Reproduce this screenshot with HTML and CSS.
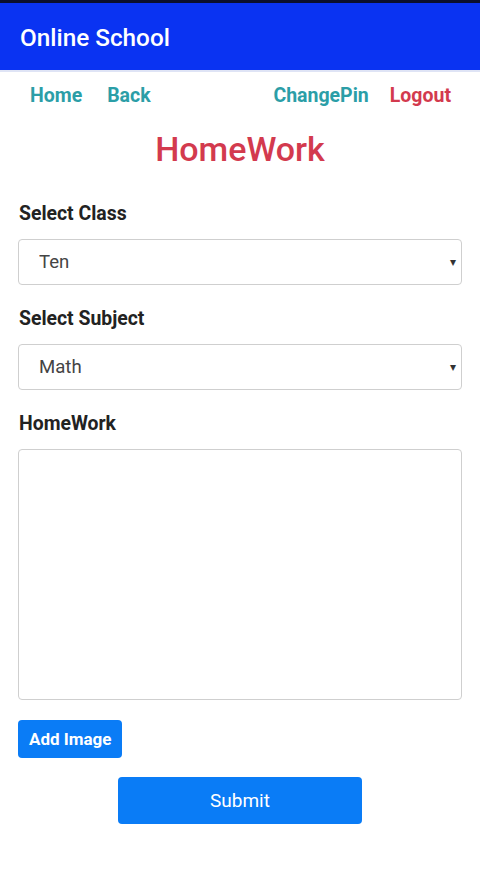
FILE: index.html
```html
<!DOCTYPE html>
<html lang="en">
<head>
    <meta charset="UTF-8">
    <meta name="viewport" content="width=device-width, initial-scale=1.0">
    <title>HomeWork</title>
    <link rel="stylesheet" href="styles.css">
</head>
<body>
    <div class="status-strip"></div>
    <header class="app-bar">
        <h1>Online School</h1>
    </header>

    <nav class="nav-links">
        <div class="nav-left">
            <a href="#">Home</a>
            <a href="#">Back</a>
        </div>
        <div class="nav-right">
            <a href="#">ChangePin</a>
            <a href="#" class="logout">Logout</a>
        </div>
    </nav>

    <main class="content">
        <h2 class="page-title">HomeWork</h2>

        <label class="field-label" for="classSelect">Select Class</label>
        <div class="select-box">
            <select id="classSelect">
                <option>Ten</option>
            </select>
            <span class="arrow">&#9662;</span>
        </div>

        <label class="field-label" for="subjectSelect">Select Subject</label>
        <div class="select-box">
            <select id="subjectSelect">
                <option>Math</option>
            </select>
            <span class="arrow">&#9662;</span>
        </div>

        <label class="field-label" for="homework">HomeWork</label>
        <textarea id="homework" class="homework-text"></textarea>

        <button class="add-image">Add Image</button>
        <div class="submit-row">
            <button class="submit-button">Submit</button>
        </div>
    </main>
</body>
</html>
```

FILE: styles.css
```css
body {
    margin: 0;
    font-family: Roboto, "Noto Sans", Arial, sans-serif;
    background: white;
    color: #222;
}
.status-strip {
    height: 3px;
    background: #0b0f2e;
}
.app-bar {
    background: #0a33f2;
    height: 67px;
    display: flex;
    align-items: center;
    padding: 0 20px;
    border-bottom: 2px solid #dfe4f5;
}
.app-bar h1 {
    margin: 0;
    color: white;
    font-size: 24.3px;
    font-weight: 500;
    padding-top: 1px;
}
.nav-links {
    display: flex;
    justify-content: space-between;
    padding: 0 29px 0 30px;
    height: 46px;
    align-items: center;
}
.nav-links a {
    color: #2b9ea7;
    font-weight: bold;
    font-size: 19.5px;
    text-decoration: none;
}
.nav-left a {
    margin-right: 21px;
}
.nav-right a {
    margin-left: 17px;
}
.nav-links .logout {
    color: #d33a4e;
}
.content {
    padding: 0 18px;
}
.page-title {
    margin: 7px 0 0;
    padding-bottom: 7px;
    text-align: center;
    color: #d33a4e;
    font-size: 34px;
    font-weight: 500;
    line-height: 48px;
}
.field-label {
    display: block;
    font-weight: bold;
    font-size: 19.4px;
    margin: 23px 0 14px 1px;
    line-height: 22px;
}
.select-box {
    position: relative;
}
.select-box select {
    display: block;
    width: 100%;
    height: 46px;
    appearance: none;
    -webkit-appearance: none;
    background: white;
    border: 1px solid #cfcfcf;
    border-radius: 4px;
    padding: 0 20px;
    font-family: inherit;
    font-size: 18.6px;
    color: #444;
}
.select-box .arrow {
    position: absolute;
    right: 6px;
    top: 50%;
    transform: translateY(-50%);
    font-size: 12px;
    color: #333;
}
.homework-text {
    display: block;
    width: 100%;
    box-sizing: border-box;
    height: 251px;
    border: 1px solid #cfcfcf;
    border-radius: 4px;
    resize: none;
    margin: 0;
}
.add-image {
    display: block;
    margin-top: 20px;
    background: #0a7cf6;
    color: white;
    border: none;
    border-radius: 4px;
    font-family: inherit;
    font-weight: bold;
    font-size: 17px;
    height: 38px;
    padding: 0 11px;
}
.submit-row {
    display: flex;
    justify-content: center;
    margin-top: 19px;
}
.submit-button {
    background: #0a7cf6;
    color: white;
    border: none;
    border-radius: 4px;
    font-family: inherit;
    font-size: 19px;
    width: 244px;
    height: 47px;
}
```
